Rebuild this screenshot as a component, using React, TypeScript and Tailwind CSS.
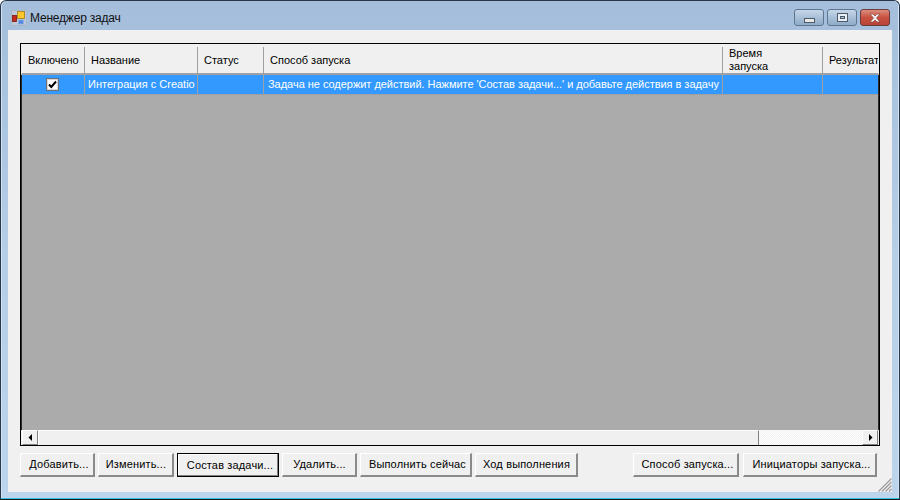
const COLUMNS = [
  { label: "Включено", width: "w-[63px]", pad: "pl-[6px]" },
  { label: "Название", width: "w-[113px]", pad: "pl-[6px]" },
  { label: "Статус", width: "w-[66px]", pad: "pl-[6px]" },
  { label: "Способ запуска", width: "w-[459px]", pad: "pl-[6px]" },
  { label: "Время запуска", width: "w-[100px]", pad: "pl-[6px] pr-[40px]" },
  { label: "Результат", width: "w-[80px]", pad: "pl-[6px]" },
];

const LEFT_BUTTONS = [
  { label: "Добавить...", width: "w-[75px]", pad: "pl-[4px]" },
  { label: "Изменить...", width: "w-[76px]", pad: "pl-[1px]" },
  { label: "Состав задачи...", width: "w-[102px]", pad: "pl-[4px]", active: true },
  { label: "Удалить...", width: "w-[75px]", pad: "pl-[1px]" },
  { label: "Выполнить сейчас", width: "w-[112px]", pad: "pl-[4px]" },
  { label: "Ход выполнения", width: "w-[103px]", pad: "pl-[1px]" },
];

const RIGHT_BUTTONS = [
  { label: "Способ запуска...", width: "w-[106px]", pad: "pl-[4px]" },
  { label: "Инициаторы запуска...", width: "w-[134px]", pad: "pl-[4px]" },
];

function AppIcon() {
  return (
    <svg width="16" height="16" viewBox="0 0 16 16" className="shrink-0">
      <rect x="0.5" y="0.5" width="15" height="15" fill="#c3ccd6" stroke="#aab4c0" opacity="0.7" />
      <rect x="1.5" y="5.5" width="4" height="6" fill="#c8281c" stroke="#7a1a12" strokeWidth="0.8" />
      <rect x="6.5" y="1.5" width="7" height="7" fill="#fbc62c" stroke="#a87c10" strokeWidth="0.8" />
      <rect x="7.5" y="10" width="5" height="4" fill="#4f86e0" stroke="#8fb0e0" strokeWidth="0.8" />
    </svg>
  );
}

function WinButton({ kind }: { kind: "min" | "max" | "close" }) {
  if (kind === "close") {
    return (
      <div className="flex h-[17px] w-[30px] items-center justify-center rounded-[3px] border border-[#6b3a3a] bg-gradient-to-b from-[#dc8c7e] via-[#c8503e] to-[#b8453a]">
        <svg width="14" height="10" viewBox="0 0 14 10">
          <path d="M2 1 L5 1 L7 3 L9 1 L12 1 L8.5 5 L12 9 L9 9 L7 7 L5 9 L2 9 L5.5 5 Z" fill="#f4efee" stroke="#7a3a34" strokeWidth="0.6" />
        </svg>
      </div>
    );
  }
  return (
    <div className="flex h-[17px] w-[30px] items-center justify-center rounded-[3px] border border-[#5e7590] bg-gradient-to-b from-[#c5d6e8] via-[#a9c0d8] to-[#8fabc8]">
      {kind === "min" ? (
        <div className="mt-[5px] h-[5px] w-[11px] border border-[#4c5a6a] bg-[#e8e8e8]" />
      ) : (
        <div className="flex h-[9px] w-[11px] items-center justify-center border border-[#4c5a6a] bg-[#e8eef4]">
          <div className="h-[3px] w-[5px] border border-[#4c5a6a] bg-[#a9c0d8]" />
        </div>
      )}
    </div>
  );
}

function HeaderCell({ label, width, pad }: { label: string; width: string; pad: string }) {
  return (
    <div className={`relative flex h-[30px] shrink-0 items-center leading-[13px] ${width} ${pad}`}>
      <span>{label}</span>
      <div className="absolute right-0 top-[2px] h-[26px] w-px bg-[#a0a0a0]" />
    </div>
  );
}

function RowCell({ width, children, pad = "pl-[3px]" }: { width: string; children?: React.ReactNode; pad?: string }) {
  return (
    <div className={`flex h-[20px] shrink-0 items-center overflow-hidden whitespace-nowrap border-r border-b border-[#a0a0a0] bg-[#3399ff] text-white ${pad} ${width}`}>
      {children}
    </div>
  );
}

function CheckBox() {
  return (
    <div className="ml-[21px] flex h-[13px] w-[13px] items-center justify-center border border-[#707070] bg-white shadow-[inset_0_0_0_1px_#d8d8d8]">
      <svg width="9" height="9" viewBox="0 0 9 9">
        <path d="M1 4.5 L3.3 7 L8 1.5" fill="none" stroke="#000" strokeWidth="2" />
      </svg>
    </div>
  );
}

function FormButton({ label, width, pad, active }: { label: string; width: string; pad: string; active?: boolean }) {
  return (
    <div
      className={`flex h-[24px] shrink-0 items-center justify-center whitespace-nowrap bg-[#f0f0f0] tracking-[0.15px] text-black ${pad} ${width} ${
        active
          ? "border border-black shadow-[inset_-1px_-1px_0_#808080,inset_1px_1px_0_#fff]"
          : "border-t border-l border-white border-r-[2px] border-b-[2px] border-r-[#8a8a8a] border-b-[#8a8a8a]"
      }`}
    >
      {label}
    </div>
  );
}

function ScrollButton({ dir }: { dir: "left" | "right" }) {
  return (
    <div className="flex h-[15px] w-[16px] shrink-0 items-center justify-center border-t border-l border-white border-r border-b border-r-[#808080] border-b-[#808080] bg-[#f0f0f0]">
      <svg width="5" height="7" viewBox="0 0 5 7">
        <path d={dir === "left" ? "M4 0 L4 7 L0.5 3.5 Z" : "M1 0 L1 7 L4.5 3.5 Z"} fill="#000" />
      </svg>
    </div>
  );
}

export default function App() {
  return (
    <div className="flex h-[500px] w-[900px] flex-col overflow-hidden rounded-t-[6px] border-x border-t border-b border-x-[#27384a] border-t-[#27384a] border-b-[#111c24] bg-gradient-to-b from-[#a4bedb] via-[#b5cde5] to-[#bcd4ec] shadow-[inset_0_-1px_0_#34c3dc,inset_1px_0_0_#d4e4f2,inset_-1px_0_0_#d4e4f2] font-['Liberation_Sans',sans-serif] text-[11px] text-black">
      {/* title bar */}
      <div className="flex h-[29px] shrink-0 items-center pl-[10px] pr-[9px] pt-[4px]">
        <AppIcon />
        <span className="ml-[3px] text-[12px] tracking-[-0.2px] text-[#111]">Менеджер задач</span>
        <div className="ml-auto flex gap-[3px]">
          <WinButton kind="min" />
          <WinButton kind="max" />
          <WinButton kind="close" />
        </div>
      </div>

      {/* client area */}
      <div className="relative mx-[7px] flex h-[462px] shrink-0 flex-col bg-[#f0f0f0] pl-[12px] pr-[12px] pt-[13px]">
        <div className="flex h-[403px] w-[860px] flex-col overflow-hidden border border-black bg-[#ababab]">
          <div className="flex h-[31px] shrink-0 overflow-hidden border-x border-t border-b-2 border-x-[#f0f0f0] border-t-[#f0f0f0] border-b-[#a0a0a0] bg-[#f0f0f0]">
            {COLUMNS.map((col) => (
              <HeaderCell key={col.label} {...col} />
            ))}
          </div>
          <div className="flex min-h-0 flex-1 flex-col overflow-hidden border-x border-[#2a2a2a]">
            <div className="flex shrink-0">
              <RowCell width="w-[63px]">
                <CheckBox />
              </RowCell>
              <RowCell width="w-[113px]">Интеграция с Creatio</RowCell>
              <RowCell width="w-[66px]" />
              <RowCell width="w-[459px]" pad="pl-[4px] tracking-[-0.03px]">
                Задача не содержит действий. Нажмите 'Состав задачи...' и добавьте действия в задачу
              </RowCell>
              <RowCell width="w-[100px]" />
              <RowCell width="w-[80px]" />
            </div>
          </div>
          <div className="flex h-[15px] shrink-0 border-x border-[#f0f0f0] bg-[#f0f0f0]">
            <ScrollButton dir="left" />
            <div className="h-[15px] w-[721px] border-t border-l border-r border-t-white border-l-white border-r-[#808080] bg-[#f0f0f0]" />
            <div className="flex-1 bg-[repeating-conic-gradient(#ffffff_0_25%,#f0f0f0_0_50%)] bg-[length:2px_2px]" />
            <ScrollButton dir="right" />
          </div>
        </div>

        <div className="mt-[7px] flex w-[857px]">
          <div className="flex gap-[3px]">
            {LEFT_BUTTONS.map((b) => (
              <FormButton key={b.label} {...b} />
            ))}
          </div>
          <div className="ml-auto flex gap-[4px]">
            {RIGHT_BUTTONS.map((b) => (
              <FormButton key={b.label} {...b} />
            ))}
          </div>
        </div>

        <svg width="14" height="14" viewBox="0 0 14 14" className="absolute bottom-0 right-0">
          <path d="M13.5 0.5 L0.5 13.5 M13.5 4 L4 13.5 M13.5 7.5 L7.5 13.5 M13.5 11 L11 13.5" stroke="#9a9a9a" strokeWidth="1.2" />
        </svg>
      </div>
    </div>
  );
}
